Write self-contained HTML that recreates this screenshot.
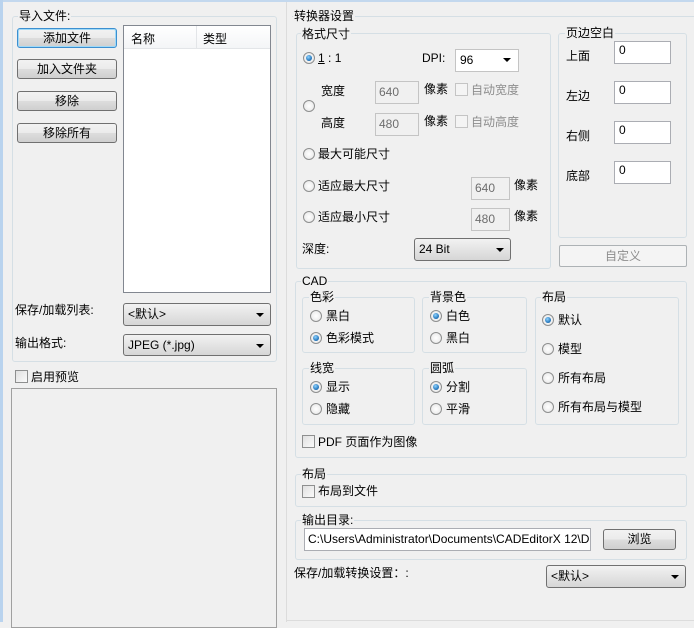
<!DOCTYPE html><html><head><meta charset="utf-8"><style>
*{box-sizing:border-box;margin:0;padding:0}
body{width:694px;height:622px;background:#f0f0f0;position:relative;overflow:hidden;font:12px "Liberation Sans","Noto Sans CJK SC",sans-serif;color:#000}
div,span{position:absolute}
.g{border:1px solid #d5dfe5;border-radius:3px}
.l{background:#f0f0f0;padding:0 1px;line-height:14px;white-space:nowrap}
.t{line-height:14px;white-space:nowrap}
.btn{border:1px solid #707070;border-radius:3px;background:linear-gradient(#f2f2f2 0,#ebebeb 50%,#dddddd 51%,#cfcfcf 100%);text-align:center;line-height:18px}
.in{background:#fff;border:1px solid #abadb3;line-height:18px;padding-left:4px}
.dis{background:#f0f0f0;border:1px solid #c4c4c4;color:#6d6d6d;line-height:20px;padding-left:3px}
.cb{border:1px solid #707070;border-radius:3px;background:linear-gradient(#f2f2f2,#d6d6d6);line-height:20px;padding-left:4px}
.cb:after{content:"";position:absolute;right:6px;top:9px;border:4px solid transparent;border-top:4px solid #000;border-bottom:0}
.r{width:12px;height:12px;border-radius:50%;border:1px solid #8e8f8f;background:radial-gradient(#fff,#e4e4e4)}
.r.on:after{content:"";position:absolute;left:2px;top:2px;width:6px;height:6px;border-radius:50%;background:radial-gradient(circle at 40% 35%,#8fd3ff,#1d6fb6 70%,#10406f)}
.c{width:13px;height:13px;border:1px solid #8e8f8f;background:linear-gradient(135deg,#e0e0e0,#fafafa)}
</style></head><body>
<div style="left:0;top:0;width:694px;height:2px;background:#c3d8ee"></div>
<div style="left:0;top:0;width:3px;height:622px;background:#b9d3ee"></div>
<div style="left:286px;top:2px;width:1px;height:620px;background:#dcdcdc"></div>

<div class="g" style="left:12px;top:16px;width:265px;height:346px"></div>
<span class="l" style="left:18px;top:9px">导入文件:</span>
<div class="btn" style="left:17px;top:28px;width:100px;height:20px;border-color:#3c8fd0;box-shadow:inset 0 0 0 1px #9fd9f7">添加文件</div>
<div class="btn" style="left:17px;top:59px;width:100px;height:20px">加入文件夹</div>
<div class="btn" style="left:17px;top:91px;width:100px;height:20px">移除</div>
<div class="btn" style="left:17px;top:123px;width:100px;height:20px">移除所有</div>
<div style="left:123px;top:25px;width:148px;height:268px;background:#fff;border:1px solid #828790"></div>
<div style="left:124px;top:26px;width:146px;height:23px;background:linear-gradient(#fff,#f4f5f7);border-bottom:1px solid #e3e5e8"></div>
<div style="left:196px;top:26px;width:1px;height:23px;background:#e3e5e8"></div>
<span class="t" style="left:131px;top:32px">名称</span>
<span class="t" style="left:203px;top:32px">类型</span>
<span class="t" style="left:15px;top:303px">保存/加载列表:</span>
<div class="cb" style="left:123px;top:303px;width:148px;height:23px">&lt;默认&gt;</div>
<span class="t" style="left:15px;top:336px">输出格式:</span>
<div class="cb" style="left:123px;top:334px;width:148px;height:22px">JPEG (*.jpg)</div>
<div class="c" style="left:15px;top:370px"></div>
<span class="t" style="left:31px;top:370px">启用预览</span>
<div style="left:11px;top:388px;width:266px;height:240px;border:1px solid #a0a0a0"></div>

<div style="left:292px;top:16px;width:402px;height:1px;background:#d5dfe5"></div>
<span class="l" style="left:293px;top:9px">转换器设置</span>
<div class="g" style="left:296px;top:33px;width:255px;height:236px"></div>
<span class="l" style="left:301px;top:27px">格式尺寸</span>
<div class="r on" style="left:303px;top:52px"></div>
<span class="t" style="left:318px;top:51px"><u>1</u> : 1</span>
<span class="t" style="left:422px;top:51px">DPI:</span>
<div class="in" style="left:455px;top:49px;width:64px;height:23px;border-color:#c4c4c4;line-height:21px">96</div>
<div style="left:503px;top:58px;border:4px solid transparent;border-top:4px solid #000"></div>
<span class="t" style="left:321px;top:84px">宽度</span>
<div class="dis" style="left:375px;top:81px;width:44px;height:23px">640</div>
<span class="t" style="left:424px;top:82px">像素</span>
<div class="c" style="left:455px;top:83px;border-color:#c4c4c4;background:#f4f4f4"></div>
<span class="t" style="left:471px;top:83px;color:#8d8d8d">自动宽度</span>
<div class="r" style="left:303px;top:100px"></div>
<span class="t" style="left:321px;top:116px">高度</span>
<div class="dis" style="left:375px;top:113px;width:44px;height:23px">480</div>
<span class="t" style="left:424px;top:114px">像素</span>
<div class="c" style="left:455px;top:115px;border-color:#c4c4c4;background:#f4f4f4"></div>
<span class="t" style="left:471px;top:115px;color:#8d8d8d">自动高度</span>
<div class="r" style="left:303px;top:148px"></div>
<span class="t" style="left:318px;top:147px">最大可能尺寸</span>
<div class="r" style="left:303px;top:180px"></div>
<span class="t" style="left:318px;top:179px">适应最大尺寸</span>
<div class="dis" style="left:471px;top:177px;width:39px;height:23px">640</div>
<span class="t" style="left:514px;top:178px">像素</span>
<div class="r" style="left:303px;top:211px"></div>
<span class="t" style="left:318px;top:210px">适应最小尺寸</span>
<div class="dis" style="left:471px;top:208px;width:39px;height:23px">480</div>
<span class="t" style="left:514px;top:209px">像素</span>
<span class="t" style="left:302px;top:242px">深度:</span>
<div class="cb" style="left:414px;top:238px;width:97px;height:23px">24 Bit</div>

<div class="g" style="left:558px;top:33px;width:129px;height:205px"></div>
<span class="l" style="left:565px;top:26px">页边空白</span>
<span class="t" style="left:566px;top:49px">上面</span>
<div class="in" style="left:614px;top:41px;width:57px;height:23px;line-height:17px">0</div>
<span class="t" style="left:566px;top:89px">左边</span>
<div class="in" style="left:614px;top:81px;width:57px;height:23px;line-height:17px">0</div>
<span class="t" style="left:566px;top:129px">右侧</span>
<div class="in" style="left:614px;top:121px;width:57px;height:23px;line-height:17px">0</div>
<span class="t" style="left:566px;top:169px">底部</span>
<div class="in" style="left:614px;top:161px;width:57px;height:23px;line-height:17px">0</div>
<div style="left:559px;top:245px;width:128px;height:22px;border:1px solid #adb2b5;border-radius:2px;background:#f4f4f4;color:#8d8d8d;text-align:center;line-height:20px">自定义</div>

<div class="g" style="left:295px;top:281px;width:392px;height:177px"></div>
<span class="l" style="left:301px;top:274px">CAD</span>
<div class="g" style="left:302px;top:297px;width:113px;height:56px"></div>
<span class="l" style="left:309px;top:290px">色彩</span>
<div class="r" style="left:310px;top:310px"></div><span class="t" style="left:326px;top:309px">黑白</span>
<div class="r on" style="left:310px;top:332px"></div><span class="t" style="left:326px;top:331px">色彩模式</span>
<div class="g" style="left:422px;top:297px;width:105px;height:56px"></div>
<span class="l" style="left:429px;top:290px">背景色</span>
<div class="r on" style="left:430px;top:310px"></div><span class="t" style="left:446px;top:309px">白色</span>
<div class="r" style="left:430px;top:332px"></div><span class="t" style="left:446px;top:331px">黑白</span>
<div class="g" style="left:535px;top:297px;width:144px;height:128px"></div>
<span class="l" style="left:541px;top:290px">布局</span>
<div class="r on" style="left:542px;top:314px"></div><span class="t" style="left:558px;top:313px">默认</span>
<div class="r" style="left:542px;top:343px"></div><span class="t" style="left:558px;top:342px">模型</span>
<div class="r" style="left:542px;top:372px"></div><span class="t" style="left:558px;top:371px">所有布局</span>
<div class="r" style="left:542px;top:401px"></div><span class="t" style="left:558px;top:400px">所有布局与模型</span>
<div class="g" style="left:302px;top:368px;width:113px;height:57px"></div>
<span class="l" style="left:309px;top:361px">线宽</span>
<div class="r on" style="left:310px;top:381px"></div><span class="t" style="left:326px;top:380px">显示</span>
<div class="r" style="left:310px;top:403px"></div><span class="t" style="left:326px;top:402px">隐藏</span>
<div class="g" style="left:422px;top:368px;width:105px;height:57px"></div>
<span class="l" style="left:429px;top:361px">圆弧</span>
<div class="r on" style="left:430px;top:381px"></div><span class="t" style="left:446px;top:380px">分割</span>
<div class="r" style="left:430px;top:403px"></div><span class="t" style="left:446px;top:402px">平滑</span>
<div class="c" style="left:302px;top:435px"></div>
<span class="t" style="left:318px;top:435px">PDF 页面作为图像</span>

<div class="g" style="left:295px;top:474px;width:392px;height:33px"></div>
<span class="l" style="left:301px;top:467px">布局</span>
<div class="c" style="left:302px;top:485px"></div>
<span class="t" style="left:318px;top:484px">布局到文件</span>

<div class="g" style="left:295px;top:520px;width:392px;height:40px"></div>
<span class="l" style="left:301px;top:513px">输出目录:</span>
<div class="in" style="left:304px;top:528px;width:287px;height:23px;line-height:21px;padding-left:3px;overflow:hidden;white-space:nowrap">C:\Users\Administrator\Documents\CADEditorX 12\D</div>
<div class="btn" style="left:603px;top:529px;width:73px;height:21px">浏览</div>
<span class="t" style="left:294px;top:566px">保存/加载转换设置：:</span>
<div class="cb" style="left:546px;top:565px;width:140px;height:23px">&lt;默认&gt;</div>
<div style="left:287px;top:620px;width:407px;height:1px;background:#dcdcdc"></div>
</body></html>
